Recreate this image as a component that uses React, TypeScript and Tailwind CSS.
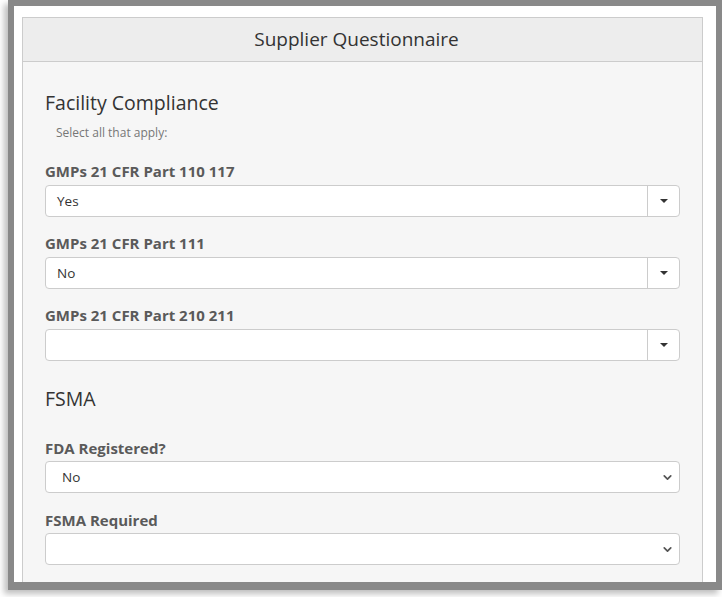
import { ChevronDown } from 'lucide-react'

const comboFields = [
  { label: 'GMPs 21 CFR Part 110 117', value: 'Yes' },
  { label: 'GMPs 21 CFR Part 111', value: 'No' },
  { label: 'GMPs 21 CFR Part 210 211', value: '' },
]

const selectFields = [
  { label: 'FDA Registered?', value: 'No' },
  { label: 'FSMA Required', value: '' },
]

function Combo({ label, value }: { label: string; value: string }) {
  return (
    <div className="mb-4">
      <div className="h-5 leading-5 mb-1 text-[15px] font-bold text-[#5a5a5a]">{label}</div>
      <div className="flex h-8 rounded border border-[#ccc] bg-white">
        <div className="flex-1 px-[11px] leading-[30px] text-[13.5px] text-[#333]">{value}</div>
        <div className="w-8 flex items-center justify-center border-l border-[#ccc]">
          <span className="w-0 h-0 border-t-[4px] border-t-[#333] border-x-[4px] border-x-transparent" />
        </div>
      </div>
    </div>
  )
}

function NativeSelect({ label, value }: { label: string; value: string }) {
  return (
    <div className="mb-[17px]">
      <div className="h-5 leading-5 mb-[3px] text-[15px] font-bold text-[#5a5a5a]">{label}</div>
      <div className="flex items-center h-8 rounded border border-[#ccc] bg-white pl-4 pr-[5px]">
        <div className="flex-1 text-[13.5px] text-[#333]">{value}</div>
        <ChevronDown size={13} strokeWidth={3.2} className="text-[#555]" />
      </div>
    </div>
  )
}

export default function App() {
  return (
    <div className="w-[722px] h-[597px] bg-white overflow-hidden" style={{ fontFamily: '"Open Sans", "Noto Sans", sans-serif' }}>
      <div className="ml-[8px] w-[714px] h-[590px] border-[6px] border-b-[8px] border-[#898989] bg-white pt-[11px] pl-[8px] pr-[13px] overflow-hidden shadow-[-4px_4px_6px_rgba(0,0,0,0.25)]">
        <div className="border border-[#ccc] h-full">
          {/* Header */}
          <div className="h-[44px] bg-[#ededed] border-b border-[#ccc] flex items-center justify-center pr-3">
            <span className="text-[19px] font-medium text-[#333]">Supplier Questionnaire</span>
          </div>

          {/* Body */}
          <div className="bg-[#f6f6f6] h-full flex flex-col px-[22px] pt-[26px]">
            <h3 className="h-[30px] leading-[30px] text-[19.5px] font-medium text-[#333]">Facility Compliance</h3>
            <p className="mt-[5px] pl-[11px] h-5 leading-5 text-[12px] text-[#777]">Select all that apply:</p>

            <div className="mt-[18px]">
              {comboFields.map((f) => (
                <Combo key={f.label} label={f.label} value={f.value} />
              ))}
            </div>

            <h3 className="mt-[7px] h-[30px] leading-[30px] text-[19.5px] font-medium text-[#333]">FSMA</h3>

            <div className="mt-[24px]">
              {selectFields.map((f) => (
                <NativeSelect key={f.label} label={f.label} value={f.value} />
              ))}
            </div>
          </div>
        </div>
      </div>
    </div>
  )
}
